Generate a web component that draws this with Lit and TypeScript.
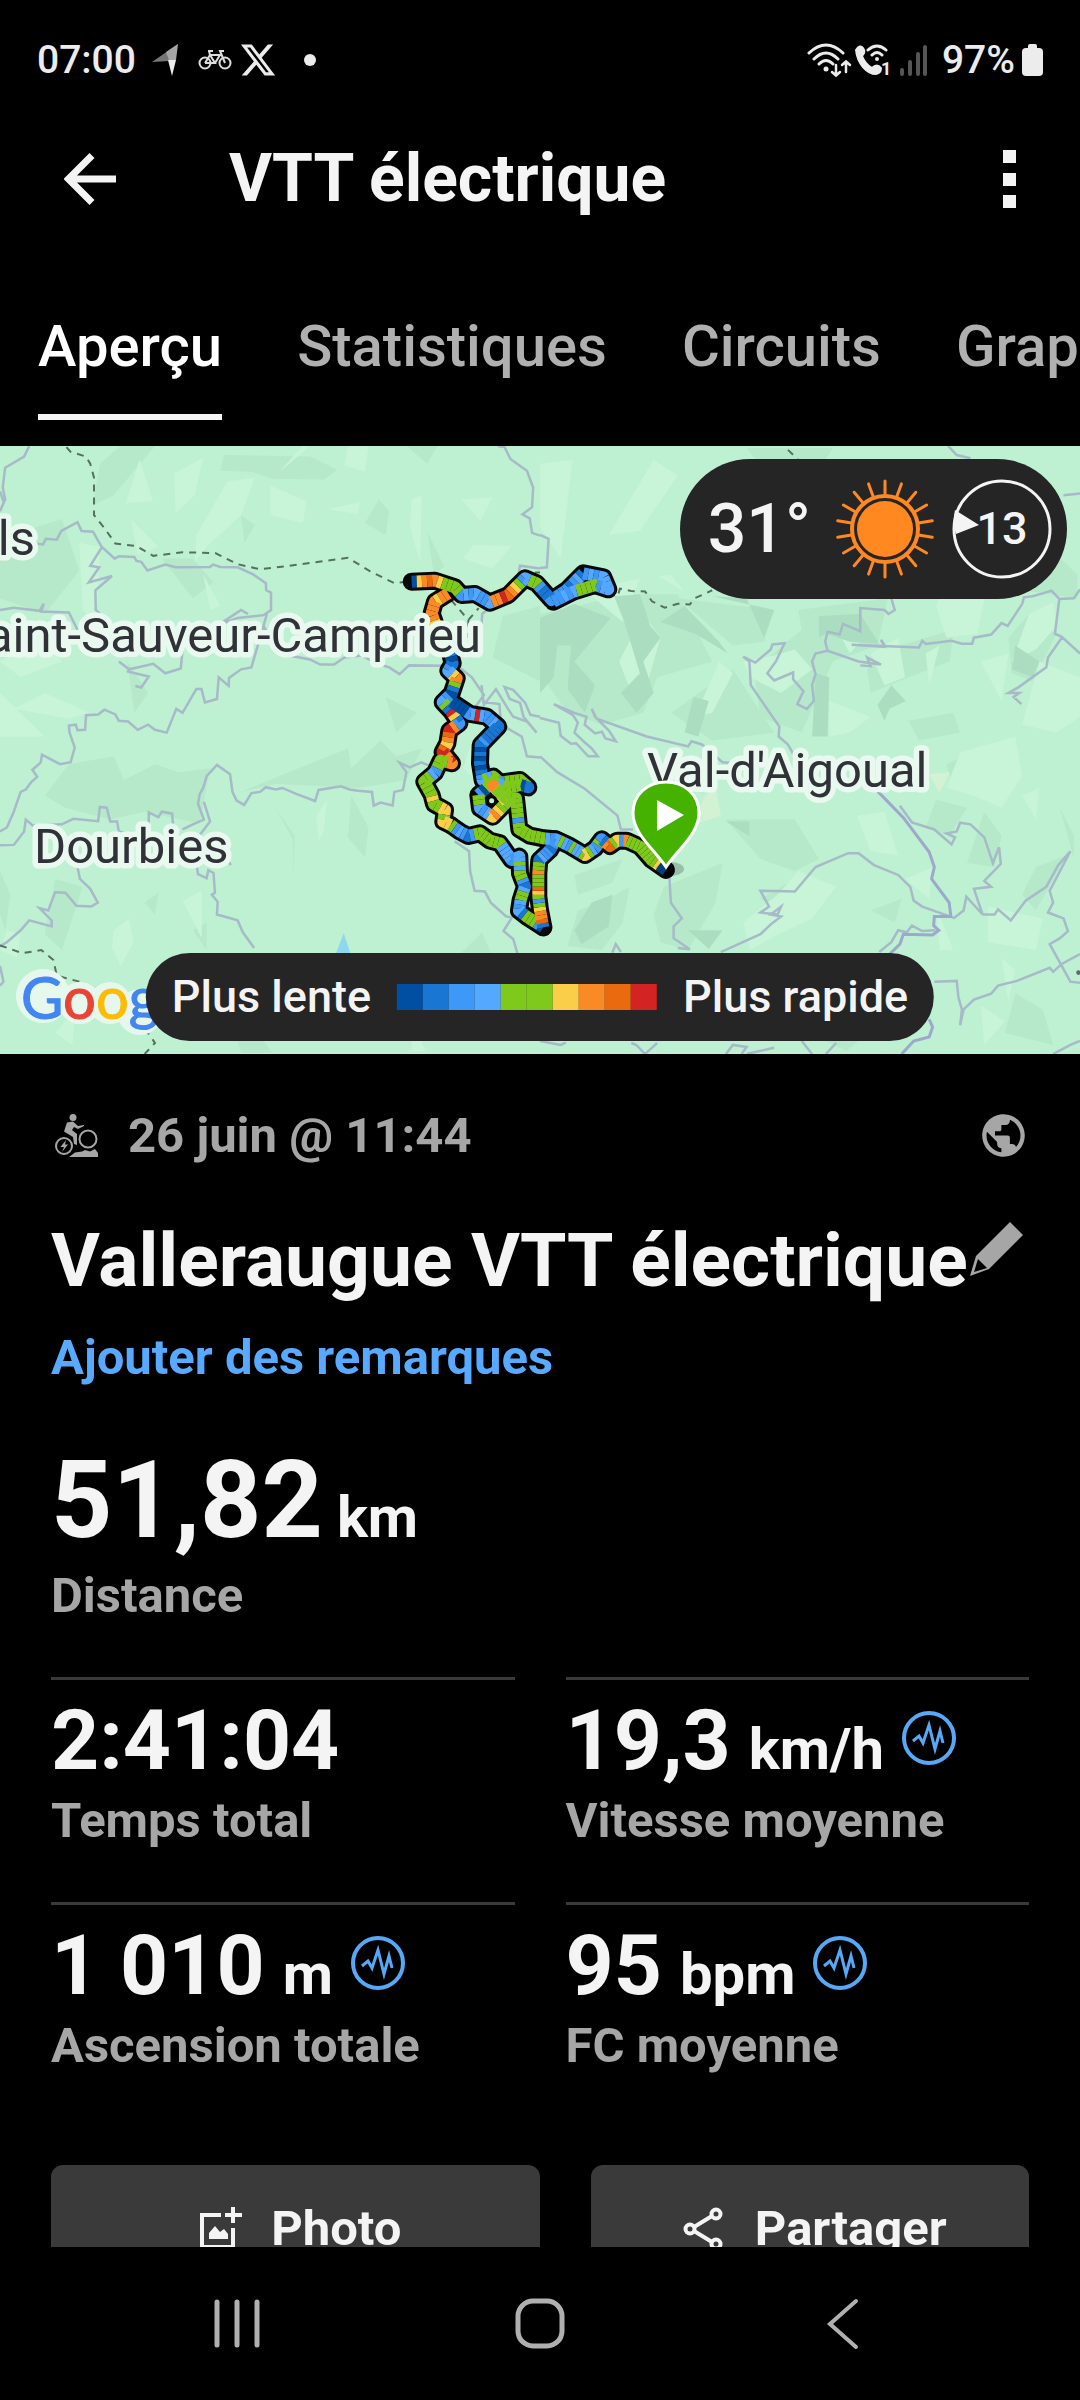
import { LitElement, html, svg, css, nothing } from "lit";
import { customElement, property, state } from "lit/decorators.js";
import { classMap } from "lit/directives/class-map.js";

type Point = [number, number];

interface Leg {
  points: Point[];
  speeds: string;
}

interface Stat {
  value: string;
  unit?: string;
  label: string;
  chart?: boolean;
}

const SPEED: Record<string, string> = {
  n: "#004fa3",
  b: "#1976d2",
  s: "#3d98f7",
  l: "#55a8ff",
  g: "#7fc91c",
  y: "#fbce4a",
  o: "#fa8a25",
  e: "#ea6a0f",
  r: "#d32323",
};

const LEGEND = ["n", "b", "s", "l", "g", "g", "y", "o", "e", "r"];

const LEGS: Leg[] = [
  {
    points: [[205, 130], [165, 155], [155, 190], [172, 240], [205, 290], [218, 340], [205, 362], [230, 385], [215, 430], [188, 457], [212, 482], [238, 520], [208, 542], [202, 580], [188, 606], [216, 640], [182, 632], [165, 668], [133, 695], [155, 735], [162, 762], [195, 780], [190, 815], [212, 825]],
    speeds: "ooyooooyoygylnbnbslyogbnslgbrybsoreoyerorogggslgggggyggyygyy",
  },
  {
    points: [[212, 825], [240, 845], [265, 858], [300, 850], [330, 872], [360, 880], [395, 930], [418, 920], [420, 970], [435, 1010], [422, 1050], [417, 1082], [440, 1100], [490, 1132]],
    speeds: "gslsbsgggggggllllsllglggsblgglslbgggsn",
  },
  {
    points: [[490, 1132], [480, 1080], [475, 1040], [475, 970], [478, 930], [510, 900], [528, 868], [570, 888], [615, 915], [645, 895], [665, 868], [690, 888], [712, 872], [740, 872], [780, 890], [815, 930], [858, 960]],
    speeds: "beooygsgyegggoggblssbsblglsgllgyglsgsboegysogggggggggynn",
  },
  {
    points: [[215, 455], [270, 492], [320, 500], [355, 530], [302, 585], [300, 640], [308, 690], [330, 700]],
    speeds: "nnnnslrlsslbbbbbsbnbnbnbsls",
  },
  {
    points: [[310, 690], [340, 680], [360, 698], [420, 690], [445, 712], [420, 705], [380, 715], [340, 695], [295, 735], [300, 775], [338, 800], [382, 755], [340, 708], [378, 745], [408, 745], [418, 838], [450, 857], [490, 865], [525, 868]],
    speeds: "glggsgggggbngggglgggnsgglslyoyggyygyogggggggggsgggggggls",
  },
  {
    points: [[95, 95], [165, 92], [225, 112], [245, 135], [285, 132], [330, 158], [385, 135], [435, 85], [470, 100], [515, 150], [560, 120], [610, 70], [670, 82], [685, 118], [645, 105], [580, 125], [520, 155]],
    speeds: "nyoeoyggggslslsslooreoygslggsbbsbsssbslbslslllllsgggglslss",
  },
];

/** Cuts a polyline into equal lengths, one for each speed letter. */
function bands(leg: Leg): { d: string; color: string }[] {
  const { points, speeds } = leg;
  const lengths = [0];
  for (let i = 1; i < points.length; i++) {
    const [x0, y0] = points[i - 1];
    const [x1, y1] = points[i];
    lengths.push(lengths[i - 1] + Math.hypot(x1 - x0, y1 - y0));
  }
  const total = lengths[lengths.length - 1];
  const at = (s: number): Point => {
    let i = 1;
    while (i < lengths.length - 1 && lengths[i] < s) i++;
    const t = (s - lengths[i - 1]) / (lengths[i] - lengths[i - 1]);
    const [x0, y0] = points[i - 1];
    const [x1, y1] = points[i];
    return [x0 + (x1 - x0) * t, y0 + (y1 - y0) * t];
  };
  return [...speeds].map((code, k) => {
    const from = (total * k) / speeds.length;
    const to = (total * (k + 1)) / speeds.length;
    const inner = points.filter((_, i) => lengths[i] > from && lengths[i] < to);
    const d = "M" + [at(from), ...inner, at(to)].map((p) => `${p[0].toFixed(1)} ${p[1].toFixed(1)}`).join("L");
    return { d, color: SPEED[code] };
  });
}

const WEST_LIGHT =
  "M405 50L365 160 445 155ZM505 85L590 45 565 140 510 185ZM785 115L890 155 880 210 785 190ZM660 105L740 95 700 190 600 270 565 310 570 240ZM1010 15H1070L1060 80 1000 65ZM1340 150L1430 145 1395 205ZM1195 150L1225 140 1220 310 1190 220ZM1375 265L1485 268 1430 325 1345 300ZM950 175L1045 157 1040 187ZM0 560L130 490 180 560 60 600ZM130 640L260 690 200 705 40 680ZM0 640L130 750H0ZM530 1165L586 1140V1260ZM330 1240L375 1210 388 1270 350 1330 325 1285ZM918 950L950 910 940 990 925 1015ZM1370 760L1345 830 1440 910 1420 830ZM230 260L290 270 280 470 240 430ZM380 200L460 270 400 290ZM900 15H880L810 80 840 60ZM160 1500L220 1440 210 1530ZM20 1240L60 1250 50 1310 0 1290ZM1195 1450L1235 1545H1195ZM590 340L640 420 610 430Z";
const WEST_DARK =
  "M650 38L900 42 980 75 940 100 790 98 730 80 640 78ZM290 60L350 15H450L330 140 270 165ZM0 250L180 200 230 330 130 440 0 400ZM200 820L330 800 360 860 450 820 520 840 610 830 580 970 420 940 320 960 190 930 130 900ZM910 815L1010 780 1020 830 1105 760 1150 800 1225 780 1180 860 1040 880 800 870 700 890ZM1180 15H1270L1240 60ZM700 190L740 215 710 260ZM1100 150L1130 180 1120 240 1060 210ZM1460 445L1568 420V610L1430 550ZM800 930L855 1000 853 1110 850 1010ZM1020 900L1070 980 1060 1055 1010 1005ZM0 1090L30 1150 15 1240 0 1200ZM160 1110L240 1130 180 1290 130 1250ZM370 560L430 640 390 690ZM1400 1245L1425 1297H1340ZM420 1170L460 1145 450 1200ZM1240 230L1290 320 1260 340ZM470 300L560 300 620 360 560 400ZM1120 650L1210 690 1150 740ZM560 1240L600 1220V1290ZM690 1520L750 1500 790 1550H700Z";
const EAST_LIGHT =
  "M0 60L95 50 60 300 0 220ZM330 50L400 90 290 230 200 240ZM600 200L640 300 560 330ZM345 345L420 385 380 340ZM300 440L350 500 310 620 270 650 230 560ZM680 545L740 530 790 580 700 640 610 600 590 560ZM1190 330L1300 360 1270 490 1180 500 1150 420ZM1420 440L1490 410 1500 470 1440 530 1370 560ZM1040 500L1060 600 1000 620 960 540ZM1120 540L1160 520 1130 620ZM1280 560L1360 540 1340 660ZM1220 790L1380 750 1400 850 1340 930 1260 900 1180 880ZM1450 560L1568 600V700L1500 740 1400 720ZM690 1150L750 1090 860 1130 790 1210 670 1260 610 1290 590 1220ZM920 950L1000 940 1040 1050 960 1040ZM1060 1110L1140 1080 1130 1160ZM1300 1180L1460 1210 1440 1290 1300 1270ZM1340 1310L1380 1340 1360 1420ZM1150 1180L1200 1290 1160 1290ZM450 700L520 560 560 590 500 690ZM130 380L290 350 240 460ZM850 460L900 540 960 480 930 450ZM1400 900L1450 880 1440 960ZM840 660L960 700 900 740 840 750ZM1280 1430L1350 1470 1290 1530Z";
const EAST_DARK =
  "M240 390L400 390 500 560 340 600 300 690 180 720 80 690 0 590V440L110 420ZM400 400L680 430 650 510 560 520ZM750 430L1010 400 980 520 850 560 760 740 640 700 620 580 760 480ZM380 690L560 580 680 740 500 760ZM970 540L1200 480 1190 560 1070 600 960 640 950 580ZM1360 500L1420 440 1500 490 1430 610 1370 590ZM1070 710L1200 690 1220 740 1100 760ZM540 960H740L810 1060 740 1090 640 1060ZM100 1100L240 1060 210 1120 110 1150ZM180 1170L260 1130 240 1220 180 1290 80 1280 110 1190ZM360 1130L530 1070 510 1170 430 1290 350 1270 330 1200ZM1150 910L1240 930 1190 1000 1120 980ZM1290 940L1340 1000 1320 1080 1240 1070ZM1510 930L1550 1000V1060ZM1440 1080L1530 1050 1440 1190 1400 1150ZM1180 820L1330 760 1290 840 1200 880ZM700 130L830 50 850 20 600 20ZM1400 380L1500 290 1560 340V400ZM880 1450L950 1500 890 1545 830 1520ZM1380 1400L1460 1440 1490 1530 1350 1500ZM640 1160L760 1100 790 1130 690 1180ZM960 1190L1050 1160 1030 1220Z";
const EAST_DEEP =
  "M0 450L100 415 205 450 100 560 160 620 130 690 80 630 90 520 50 520 40 600 0 640ZM215 395L290 390 320 470 350 500 300 560 330 640 280 690 235 640 290 590 245 460ZM350 460L420 420 520 510 545 540 490 510 450 490ZM500 395L680 430 650 500 600 400ZM810 445L930 440 985 515 900 510 830 490 810 500ZM800 590L840 600 835 750H790ZM445 650L490 660 460 750 420 740ZM980 670L1020 620 1062 660 1015 680 1000 710ZM1380 520L1450 560 1430 600 1370 580ZM150 1170L210 1150 200 1230 120 1275 100 1240ZM430 1240L530 1240 490 1287ZM540 965L608 965V1002Z";

const WEST_ROADS =
  "M85 15L70 42 15 70 8 120 15 150 0 180M0 130L12 160M100 262L125 264 133 250 165 252 178 230 225 208 237 230 270 232 295 270 333 300 345 294 390 296 396 306 410 308 428 330 480 315 510 322 610 321 618 315 640 321 690 322 735 340 772 362 773 380 787 386V430L765 443 690 450 635 468M295 272L262 318 288 322 258 360 325 344 277 380 278 430 330 470M0 430L40 424 115 432 127 414 120 434 200 436 225 480M345 560L375 580 445 566 480 590 525 578 530 530M368 585L432 598 410 626 393 622M775 440L730 575 700 580 665 602 664 622 635 600 630 655 595 664 585 630H570L530 690 512 680 484 740 450 733 430 720 400 733 372 712 345 710 335 694 303 682 285 694 250 696 247 733 225 734 220 720 200 722 202 740 217 778 205 815 174 820 122 796 118 816 94 834 108 852 90 866 75 884 60 890 40 940 20 980 0 990M765 470L810 540 900 555 930 568 970 568 1000 550 1050 545 1095 566 1130 575 1160 592 1188 570 1290 571 1330 560M630 470L700 430 720 440M1250 825L1223 815 1190 828 1160 816 1180 840 1170 885 1145 890 1140 924 1105 917 1085 925 1080 890 1040 887 1015 884 990 876 925 885 915 913 860 895 820 880 800 884 772 878 755 890 730 893 709 923 687 912 675 890 668 845 630 822 600 850 590 880 580 895 575 920 592 960 560 972 530 985M592 915L610 965 570 1010 640 1030 670 1075M0 1025L40 1024 70 990 75 960 95 975 180 972 213 958 285 964 290 928 310 930 320 965 340 965 345 990 370 995M432 985V942L460 954 470 940 500 945 502 970M570 1070L575 1098 600 1108 605 1088 620 1095 624 1145 615 1150 632 1168 630 1200 690 1215 705 1245 738 1285M225 1080L232 1110 262 1135 284 1170 265 1180 222 1178 190 1145 160 1144 140 1190 115 1184 150 1215 150 1230 85 1215 60 1240 20 1270 0 1280M0 1330L10 1370 0 1380M1445 15L1465 18 1482 48 1530 78 1548 120 1545 170 1517 188 1538 198 1545 235 1568 242M1568 325L1510 318 1500 365 1400 440 1395 530M1338 578L1370 600 1405 645 1360 700M1398 620L1405 670 1440 630 1475 680 1490 700 1530 712 1558 740 1520 700 1510 665 1480 655 1465 625 1490 632 1525 665 1540 695 1568 700M1400 662L1450 668 1455 720 1515 750 1530 800 1568 803M1320 1015L1362 1040 1365 1090 1378 1140 1408 1142 1425 1170 1470 1205 1487 1207 1462 1242 1490 1262 1503 1300";
const EAST_ROADS =
  "M0 240L25 250 20 322 0 324M0 703L55 715 60 748 90 768 105 767 140 800H168L150 780 130 765 100 740 110 715 95 695 40 668 100 690 135 700 130 720 160 742 180 738 190 755 220 762 200 735 160 700 150 680 165 705 310 750 430 775 440 762 470 770 530 815 580 818M0 800L50 840 130 882 225 950 235 985 270 985M375 1095L380 1170 412 1210 388 1230V1260L435 1288 400 1285M525 1295L640 1250 670 1225 700 1205 670 1200 700 1180 690 1200 640 1195 665 1180 640 1140 740 1142 800 1080 895 1045 925 1045 970 1075 1040 1100 1075 1130 1085 1165 1110 1180 1200 1208M745 810L720 770 693 750 695 725 612 620 608 560 590 548 625 563 670 530 675 517 710 514 685 560 660 590 680 608 735 588 735 605 765 635 747 668 775 680 795 660 790 620 800 592 790 560 800 540 835 533 828 510 835 485 870 492 880 465 930 484V425L1000 430 1012 440 1030 430 1020 400M835 533L925 560 990 568 950 550 960 572 930 570M1005 525L990 505 1000 523 905 518 1100 525 1110 508 1120 516 1195 508 1225 515 1255 515 1260 500 1310 492 1340 463 1358 470 1400 415 1405 398 1430 395 1460 388 1485 381 1508 402 1550 400 1568 378M1508 402L1495 490 1515 498 1568 540M1515 500L1475 550 1470 575 1390 625 1360 640H1392L1375 650 1398 668M1185 15L1210 38 1250 46M1520 140L1568 135M1045 925L1080 967 1145 985 1195 1023 1205 1005 1180 995 1210 990 1220 968 1250 972 1290 1005 1315 1070 1333 1030 1338 1072 1290 1115 1310 1130 1260 1135 1285 1200 1238 1155 1230 1190 1200 1210M1285 1200L1320 1200 1330 1187 1367 1215 1410 1165 1470 1130 1505 1075 1540 1040 1480 1140 1490 1170 1475 1195 1490 1200 1520 1210 1533 1242 1510 1260 1480 1275 1540 1370 1568 1373M1145 1370L1210 1368 1215 1410 1225 1440 1220 1480 1230 1440 1260 1415 1310 1400 1330 1380 1385 1368 1480 1335 1490 1345 1515 1325 1568 1300M985 1295L1020 1270 1040 1240 1065 1245 1080 1228 1110 1242 1148 1240M210 1297L220 1275 235 1295M265 1525L280 1530 305 1553 340 1525M0 1520L60 1530 75 1524M540 1553L560 1530 600 1535 585 1553M600 1553L680 1537M760 1520L790 1553M830 1553L860 1525M1490 1553L1540 1530 1568 1520";
const EAST_MAIN_ROAD =
  "M980 888L1055 955 1130 1042 1145 1080 1137 1110 1188 1170 1193 1205 1145 1205 1143 1228 1158 1240 1140 1252 1055 1250 1045 1275 1010 1305M1130 1465L1140 1485 1130 1510 1085 1520 1050 1553";

@customElement("activity-map")
class ActivityMap extends LitElement {
  static styles = css`
    :host {
      display: block;
      position: relative;
      height: 608px;
      overflow: hidden;
      background: #bef0d2;
      color: #f4f4f4;
    }
    .canvas {
      display: block;
      width: 100%;
      height: 100%;
    }
    .canvas path {
      vector-effect: non-scaling-stroke;
    }
    .place {
      font: 400 49px/1 Roboto, "Liberation Sans", sans-serif;
      fill: #303238;
      stroke: #eaf9f0;
      stroke-width: 11px;
      stroke-linejoin: round;
      paint-order: stroke;
    }
    .brand {
      font: 400 58px/1 Lato, "Liberation Sans", sans-serif;
      stroke-width: 1px;
    }
    .blue { fill: #4285f4; stroke: #4285f4; }
    .red { fill: #ea4335; stroke: #ea4335; }
    .yellow { fill: #fbbc05; stroke: #fbbc05; }
    .green { fill: #34a853; stroke: #34a853; }
    .weather {
      position: absolute;
      top: 13px;
      right: 13px;
      display: flex;
      align-items: center;
      gap: 16px;
      height: 140px;
      padding: 0 14px 0 28px;
      border-radius: 70px;
      background: #252525;
    }
    .temperature {
      font-size: 68px;
      font-weight: 500;
      line-height: 84px;
      margin-right: 8px;
    }
    .sun {
      width: 100px;
      height: 100px;
    }
    .wind {
      position: relative;
      display: grid;
      place-items: center;
      width: 102px;
      height: 102px;
      font-size: 45px;
      font-weight: 500;
      line-height: 56px;
    }
    .wind svg {
      position: absolute;
      inset: 0;
    }
    .legend {
      position: absolute;
      bottom: 13px;
      left: 50%;
      transform: translateX(-50%);
      display: flex;
      align-items: center;
      gap: 26px;
      height: 88px;
      padding: 0 26px;
      border-radius: 44px;
      background: #252525;
      font-size: 45px;
      font-weight: 500;
      line-height: 56px;
      white-space: nowrap;
    }
    .scale {
      display: flex;
    }
    .step {
      width: 26px;
      height: 26px;
    }
  `;

  render() {
    const rays = Array.from({ length: 18 }, (_, i) => i * 20);
    return html`
      <svg class="canvas" viewBox="0 0 1080 608" preserveAspectRatio="xMidYMid slice" role="img" aria-label="Carte du parcours">
        <g transform="translate(0 -6) scale(.3444 .3954)" fill="none">
          <path d=${WEST_DARK} fill="#b6e9ca" />
          <path d=${WEST_LIGHT} fill="#c8f4d8" />
          <path d="M998 1247L1018 1300H975Z" fill="#8ed8ee" />
          <path d=${WEST_ROADS} stroke="#a6bac8" stroke-width="2.5" />
          <path
            d="M193 18L205 30 250 42 262 60 273 95V190L305 225 335 262 395 268 445 293 530 284 625 286 690 314 755 327 840 318 1010 298 1075 332 1145 362 1185 358M1310 405L1360 455 1390 425M1360 455V500M0 1278L65 1298 120 1290 155 1315 165 1355 240 1372 290 1410 350 1470 380 1495 430 1500 450 1525 420 1553"
            stroke="#55705f" stroke-width="2" stroke-dasharray="7 6"
          />
        </g>
        <g transform="translate(540 -6) scale(.3444 .3954)" fill="none">
          <path d=${EAST_DARK} fill="#b6e9ca" />
          <path d=${EAST_LIGHT} fill="#c8f4d8" />
          <path d=${EAST_DEEP} fill="#abdec1" />
          <path d="M480 900L510 880 525 950 440 975ZM1130 845L1190 840 1160 893Z" fill="#d3f2d4" />
          <path d=${EAST_ROADS} stroke="#a6bac8" stroke-width="2.5" />
          <path d=${EAST_MAIN_ROAD} stroke="#9ca9cc" stroke-width="3" />
          <path
            d="M228 388L232 376 265 382 305 383 325 408 362 424 400 414 435 416 450 400 500 380M720 25L750 50M0 335H-15"
            stroke="#55705f" stroke-width="2" stroke-dasharray="7 6"
          />
          <circle cx="1563" cy="1347" r="6" fill="#667" />
        </g>
        <g transform="translate(380 104) scale(.3333)" fill="none" stroke-linejoin="round">
          ${LEGS.map((leg) => svg`<path d=${"M" + leg.points.map((p) => p.join(" ")).join("L")} stroke="#080808" stroke-width="18" stroke-linecap="round" />`)}
          ${LEGS.map((leg) => bands(leg).map((b) => svg`<path d=${b.d} stroke=${b.color} stroke-width="12" />`))}
          <circle cx="335" cy="752" r="12" fill="#bef0d2" stroke="#080808" stroke-width="9" />
        </g>
        <text class="place" x="35" y="109" text-anchor="end">ls</text>
        <text class="place" x="481" y="206" text-anchor="end">Saint-Sauveur-Camprieu</text>
        <text class="place" x="34" y="417">Dourbies</text>
        <text class="place" x="647" y="341">Val-d'Aigoual</text>
        <ellipse cx="670" cy="423" rx="14" ry="7" fill="#000" opacity=".2" />
        <path d="M666 421C655 404 633 388 633 367C633 348 648 336 666 336S699 348 699 367C699 388 677 404 666 421Z" fill="#45b200" stroke="#fff" stroke-width="3" />
        <path d="M657 354L684 369 657 385Z" fill="#fff" />
        <g fill="#e6f8ee">
          <circle cx="43" cy="550" r="27" />
          <circle cx="80" cy="557" r="21" />
          <circle cx="110" cy="557" r="21" />
          <circle cx="140" cy="566" r="23" />
        </g>
        <text class="brand" x="21" y="573"
          ><tspan class="blue">G</tspan><tspan class="red">o</tspan><tspan class="yellow">o</tspan><tspan class="blue">g</tspan><tspan class="green">l</tspan><tspan class="red">e</tspan></text>
      </svg>

      <div class="weather">
        <span class="temperature">31°</span>
        <svg class="sun" viewBox="-50 -50 100 100" role="img" aria-label="Ensoleillé">
          <circle r="28" fill="#ff8920" />
          <circle r="33" fill="none" stroke="#ff8920" stroke-width="4" />
          ${rays.map((a) => svg`<path d="M0 -34V-48" transform="rotate(${a})" stroke="#ff8920" stroke-width="3" stroke-linecap="round" />`)}
        </svg>
        <span class="wind">
          <svg viewBox="-51 -51 102 102" aria-hidden="true">
            <circle r="48" fill="none" stroke="#f4f4f4" stroke-width="3" />
            <path d="M-47 -19L-23 -4L-46 5Q-50 -7 -47 -19Z" fill="#f4f4f4" />
          </svg>
          13
        </span>
      </div>

      <div class="legend">
        <span>Plus lente</span>
        <span class="scale" aria-hidden="true">
          ${LEGEND.map((c) => html`<span class="step" style="background:${SPEED[c]}"></span>`)}
        </span>
        <span>Plus rapide</span>
      </div>
    `;
  }
}

@customElement("stat-cell")
class StatCell extends LitElement {
  @property({ attribute: false }) stat!: Stat;
  @property({ type: Boolean, reflect: true }) hero = false;

  static styles = css`
    :host {
      display: block;
      border-top: 3px solid #3a3a3a;
      padding-top: 11px;
    }
    :host([hero]) {
      border: 0;
      padding: 0;
    }
    .figure {
      display: flex;
      align-items: baseline;
      gap: 18px;
      white-space: nowrap;
      color: #f4f4f4;
    }
    .value {
      font-size: 84px;
      font-weight: 700;
      line-height: 100px;
    }
    .unit {
      font-size: 58px;
      font-weight: 700;
    }
    :host([hero]) .figure {
      gap: 14px;
    }
    :host([hero]) .value {
      font-size: 107px;
      line-height: 130px;
    }
    .open {
      align-self: center;
      display: block;
      margin-bottom: 6px;
      padding: 0;
      border: 0;
      background: none;
      height: 54px;
    }
    .open svg {
      display: block;
      width: 54px;
      height: 54px;
    }
    .label {
      font-size: 49px;
      font-weight: 700;
      line-height: 60px;
      color: #a6a6a6;
    }
  `;

  render() {
    const { value, unit, label, chart } = this.stat;
    return html`
      <div class="figure">
        <span class="value">${value}</span>
        ${unit ? html`<span class="unit">${unit}</span>` : nothing}
        ${chart
          ? html`<button class="open" aria-label="Graphique : ${label}">
              <svg viewBox="0 0 54 54" fill="none" stroke="#57a9f8" aria-hidden="true">
                <circle cx="27" cy="27" r="25" stroke-width="4" />
                <path d="M11 30L17 25L21 32L27 14L33 38L38 20L41 32" stroke-width="3" />
              </svg>
            </button>`
          : nothing}
      </div>
      <div class="label">${label}</div>
    `;
  }
}

@customElement("app-root")
class AppRoot extends LitElement {
  @state() private tab = "Aperçu";

  private tabs = ["Aperçu", "Statistiques", "Circuits", "Graphiques"];

  private stats: Stat[] = [
    { value: "2:41:04", label: "Temps total" },
    { value: "19,3", unit: "km/h", label: "Vitesse moyenne", chart: true },
    { value: "1 010", unit: "m", label: "Ascension totale", chart: true },
    { value: "95", unit: "bpm", label: "FC moyenne", chart: true },
  ];

  static styles = css`
    :host {
      display: flex;
      flex-direction: column;
      height: 100vh;
      overflow: hidden;
      background: #000;
      color: #f4f4f4;
      font-family: Roboto, "Liberation Sans", sans-serif;
    }
    button {
      padding: 0;
      border: 0;
      background: none;
      color: inherit;
      font: inherit;
    }
    svg {
      display: block;
      flex: none;
    }
    .status {
      flex: none;
      display: flex;
      justify-content: space-between;
      align-items: center;
      height: 120px;
      padding: 0 37px;
      font-size: 39px;
      font-weight: 500;
      line-height: 46px;
      color: #ececec;
    }
    .cluster {
      display: flex;
      align-items: center;
      gap: 7px;
    }
    .bar {
      flex: none;
      display: flex;
      align-items: center;
      height: 118px;
      padding: 0 64px;
    }
    .bar h1 {
      flex: 1;
      margin: 0 0 0 113px;
      font-size: 66px;
      font-weight: 700;
      line-height: 80px;
      white-space: nowrap;
    }
    .tabs {
      flex: none;
      display: flex;
      gap: 75px;
      padding: 72px 0 26px 38px;
      overflow: hidden;
      white-space: nowrap;
    }
    .tab {
      flex: none;
      padding-bottom: 32px;
      border-bottom: 6px solid transparent;
      font-size: 58px;
      font-weight: 500;
      line-height: 72px;
      color: #b0b0b0;
    }
    .tab.selected {
      color: #fff;
      border-color: #f4f4f4;
    }
    .page {
      flex: 1;
      min-height: 0;
      overflow: hidden;
    }
    .details {
      padding: 56px 51px 0;
    }
    .meta {
      display: flex;
      align-items: center;
      gap: 26px;
      height: 51px;
      font-size: 49px;
      font-weight: 700;
      line-height: 50px;
      color: #a6a6a6;
    }
    .meta time {
      flex: 1;
    }
    .heading {
      display: flex;
      align-items: center;
      margin-top: 53px;
      white-space: nowrap;
    }
    .heading h2 {
      flex: 1;
      margin: 0;
      font-size: 75px;
      font-weight: 700;
      line-height: 92px;
    }
    .edit {
      margin: 0 6px 22px 0;
    }
    .notes {
      display: block;
      margin: 22px 0 48px;
      font-size: 49px;
      font-weight: 700;
      line-height: 60px;
      color: #57aaff;
      text-decoration: none;
    }
    .grid {
      display: grid;
      grid-template-columns: 1fr 1fr;
      gap: 51px;
      margin-top: 51px;
    }
    .actions {
      display: flex;
      gap: 51px;
      margin-top: 89px;
    }
    .action {
      flex: 438 0 0;
      display: flex;
      justify-content: center;
      align-items: center;
      gap: 28px;
      height: 127px;
      padding-left: 8px;
      border-radius: 12px;
      background: #3a3a3a;
      font-size: 49px;
      font-weight: 700;
    }
    .action.wide {
      flex-grow: 489;
    }
    .nav {
      flex: none;
      display: flex;
      justify-content: space-around;
      align-items: center;
      height: 153px;
      padding: 0 86px;
    }
  `;

  private renderStatus() {
    return html`
      <div class="status">
        <div class="cluster">
          <span>07:00</span>
          <svg width="48" height="34" viewBox="4 0 48 34" aria-hidden="true">
            <path d="M13 19L39 1L30 18Z" fill="#777" />
            <path d="M39 1L27 9L30 17H37Z" fill="#a6a6a6" />
            <path d="M29 17H37L33 33Z" fill="#ececec" />
          </svg>
          <svg width="34" height="22" viewBox="0 0 34 22" fill="none" stroke="#dcdcdc" stroke-width="2" aria-hidden="true">
            <circle cx="7" cy="14" r="5.5" /><circle cx="27" cy="14" r="5.5" />
            <path d="M7 14L12 6L17 14H7M12 6H22L17 14M10 2H15M12 6L11 2M27 14L22 2H26" />
          </svg>
          <svg width="38" height="38" viewBox="0 0 24 24" fill="#ececec" aria-hidden="true">
            <path d="M18.244 2.25h3.308l-7.227 8.26 8.502 11.24H16.17l-5.214-6.817L4.99 21.75H1.68l7.73-8.835L1.254 2.25H8.08l4.713 6.231zm-1.161 17.52h1.833L7.084 4.126H5.117z" />
          </svg>
          <svg width="50" height="12" viewBox="0 0 50 12" aria-hidden="true"><circle cx="26" cy="6" r="6" fill="#ececec" /></svg>
        </div>
        <div class="cluster">
          <svg width="128" height="36" viewBox="0 0 128 36" fill="none" stroke="#ececec" stroke-width="3" stroke-linecap="round" aria-hidden="true">
            <path d="M2 11Q19 -5 36 11M7 17Q19 5 31 17M12 22Q19 15 26 22" />
            <circle cx="19" cy="27" r="2.5" fill="#ececec" stroke="none" />
            <path d="M29 23V33M25 30L29 33.500L33 30M39 30V20M35 23L39 19.500L43 23" stroke-width="2.500" />
            <path d="M49 8Q53 2 56 6Q59 10 55 14Q58 22 65 26Q70 21 74 26Q74 31 69 32Q62 32 56 25T49 8Z" fill="#ececec" stroke-width="2" stroke-linejoin="round" />
            <path d="M61 8Q70 0 79 8M65 13Q70 8 75 13" />
            <circle cx="70" cy="17" r="2" fill="#ececec" stroke="none" />
            <path d="M95 32V28M103 32V20M111 32V12M118 32V5" stroke="#555" stroke-width="4" />
            <text x="74" y="33" fill="#ececec" stroke="none" font-size="18" font-weight="700">1</text>
          </svg>
          <span>97%</span>
          <svg width="21" height="34" viewBox="0 0 21 34" fill="#ececec" aria-hidden="true">
            <rect x="6" y="1" width="9" height="8" rx="2" /><rect y="5" width="21" height="28" rx="4" />
          </svg>
        </div>
      </div>
    `;
  }

  render() {
    return html`
      ${this.renderStatus()}
      <header class="bar">
        <button aria-label="Retour">
          <svg width="52" height="52" viewBox="0 0 52 52" fill="none" stroke="#f4f4f4" stroke-width="7" aria-hidden="true">
            <path d="M28 2.500L4.500 26L28 49.500M6 26H52" />
          </svg>
        </button>
        <h1>VTT électrique</h1>
        <button aria-label="Plus d'options">
          <svg width="13" height="60" viewBox="0 0 13 60" fill="#f4f4f4" aria-hidden="true">
            <path d="M0 1H13V14H0ZM0 24H13V37H0ZM0 46H13V59H0Z" />
          </svg>
        </button>
      </header>
      <nav class="tabs" role="tablist">
        ${this.tabs.map(
          (t) => html`<button
            class=${classMap({ tab: true, selected: t === this.tab })}
            role="tab"
            aria-selected=${t === this.tab}
            @click=${() => (this.tab = t)}
          >${t}</button>`
        )}
      </nav>
      <main class="page">
        <activity-map></activity-map>
        <section class="details">
          <div class="meta">
            <svg width="51" height="51" viewBox="0 0 51 51" fill="none" stroke="#a6a6a6" stroke-width="2" aria-hidden="true">
              <circle cx="13" cy="36" r="8" />
              <circle cx="37" cy="29" r="8.5" />
              <g fill="#a6a6a6" stroke="none">
                <circle cx="22" cy="7.500" r="3.500" />
                <path d="M15 30L9.500 37H13L11 42L17 34.500H14Z" />
                <path d="M16 12.500L22 11.500L27 16L33 15V16L27 19L23 17L21 20L26 24V35L23 34L22 27L13 21.500Z" />
                <path d="M18 47L24 42.500L31 41.500L34 40L39 41.500L44 39L47 43V47Z" />
              </g>
            </svg>
            <time>26 juin @ 11:44</time>
            <svg width="51" height="51" viewBox="0 0 24 24" fill="#a6a6a6" role="img" aria-label="Public">
              <path d="M12 2C6.480 2 2 6.480 2 12s4.480 10 10 10 10-4.480 10-10S17.520 2 12 2zm-1 17.930c-3.950-.490-7-3.850-7-7.930 0-.620.080-1.210.210-1.790L9 15v1c0 1.100.900 2 2 2v1.930zm6.900-2.540c-.260-.810-1-1.390-1.900-1.390h-1v-3c0-.550-.450-1-1-1H8v-2h2c.550 0 1-.450 1-1V7h2c1.100 0 2-.900 2-2v-.410c2.930 1.190 5 4.060 5 7.410 0 2.080-.800 3.970-2.100 5.390z" />
            </svg>
          </div>
          <div class="heading">
            <h2>Valleraugue VTT électrique</h2>
            <button class="edit" aria-label="Modifier le titre">
              <svg width="54" height="54" viewBox="0 0 54 54" aria-hidden="true">
                <path d="M41 0L54 13L20 47L1 54L7 34Z" fill="#a6a6a6" />
                <path d="M9 37L18 46L5 50Z" fill="#000" />
              </svg>
            </button>
          </div>
          <a class="notes" href="#notes">Ajouter des remarques</a>
          <stat-cell hero .stat=${{ value: "51,82", unit: "km", label: "Distance" }}></stat-cell>
          <div class="grid">${this.stats.map((s) => html`<stat-cell .stat=${s}></stat-cell>`)}</div>
          <div class="actions">
            <button class="action wide">
              <svg width="46" height="46" viewBox="0 0 46 46" fill="#f4f4f4" aria-hidden="true">
                <path d="M3 7H24V11H7V39H34V22H38V43H3Z" />
                <path d="M34 1H38V7H45V11H38V17H34V11H28V7H34ZM12 33V27L18 20L23 26L27 23L31 28V33Z" />
              </svg>
              Photo
            </button>
            <button class="action">
              <svg width="46" height="46" viewBox="0 0 46 46" fill="none" stroke="#f4f4f4" stroke-width="4" aria-hidden="true">
                <circle cx="9" cy="23" r="4.5" /><circle cx="35" cy="8" r="4.5" /><circle cx="35" cy="38" r="4.5" />
                <path d="M13 21L31 10M13 25L31 36" />
              </svg>
              Partager
            </button>
          </div>
        </section>
      </main>
      <nav class="nav">
        <button aria-label="Applications récentes">
          <svg width="50" height="52" viewBox="0 0 50 52" stroke="#b0b0b0" stroke-width="5" stroke-linecap="round" aria-hidden="true">
            <path d="M5 4V47M25 4V47M45 4V47" />
          </svg>
        </button>
        <button aria-label="Accueil">
          <svg width="50" height="52" viewBox="0 0 50 52" fill="none" stroke="#b0b0b0" stroke-width="5" aria-hidden="true">
            <rect x="3" y="3" width="44" height="45" rx="15" />
          </svg>
        </button>
        <button aria-label="Retour">
          <svg width="50" height="52" viewBox="0 0 50 52" fill="none" stroke="#b0b0b0" stroke-width="4" stroke-linecap="round" aria-hidden="true">
            <path d="M38 3L12 26L38 49" />
          </svg>
        </button>
      </nav>
    `;
  }
}
